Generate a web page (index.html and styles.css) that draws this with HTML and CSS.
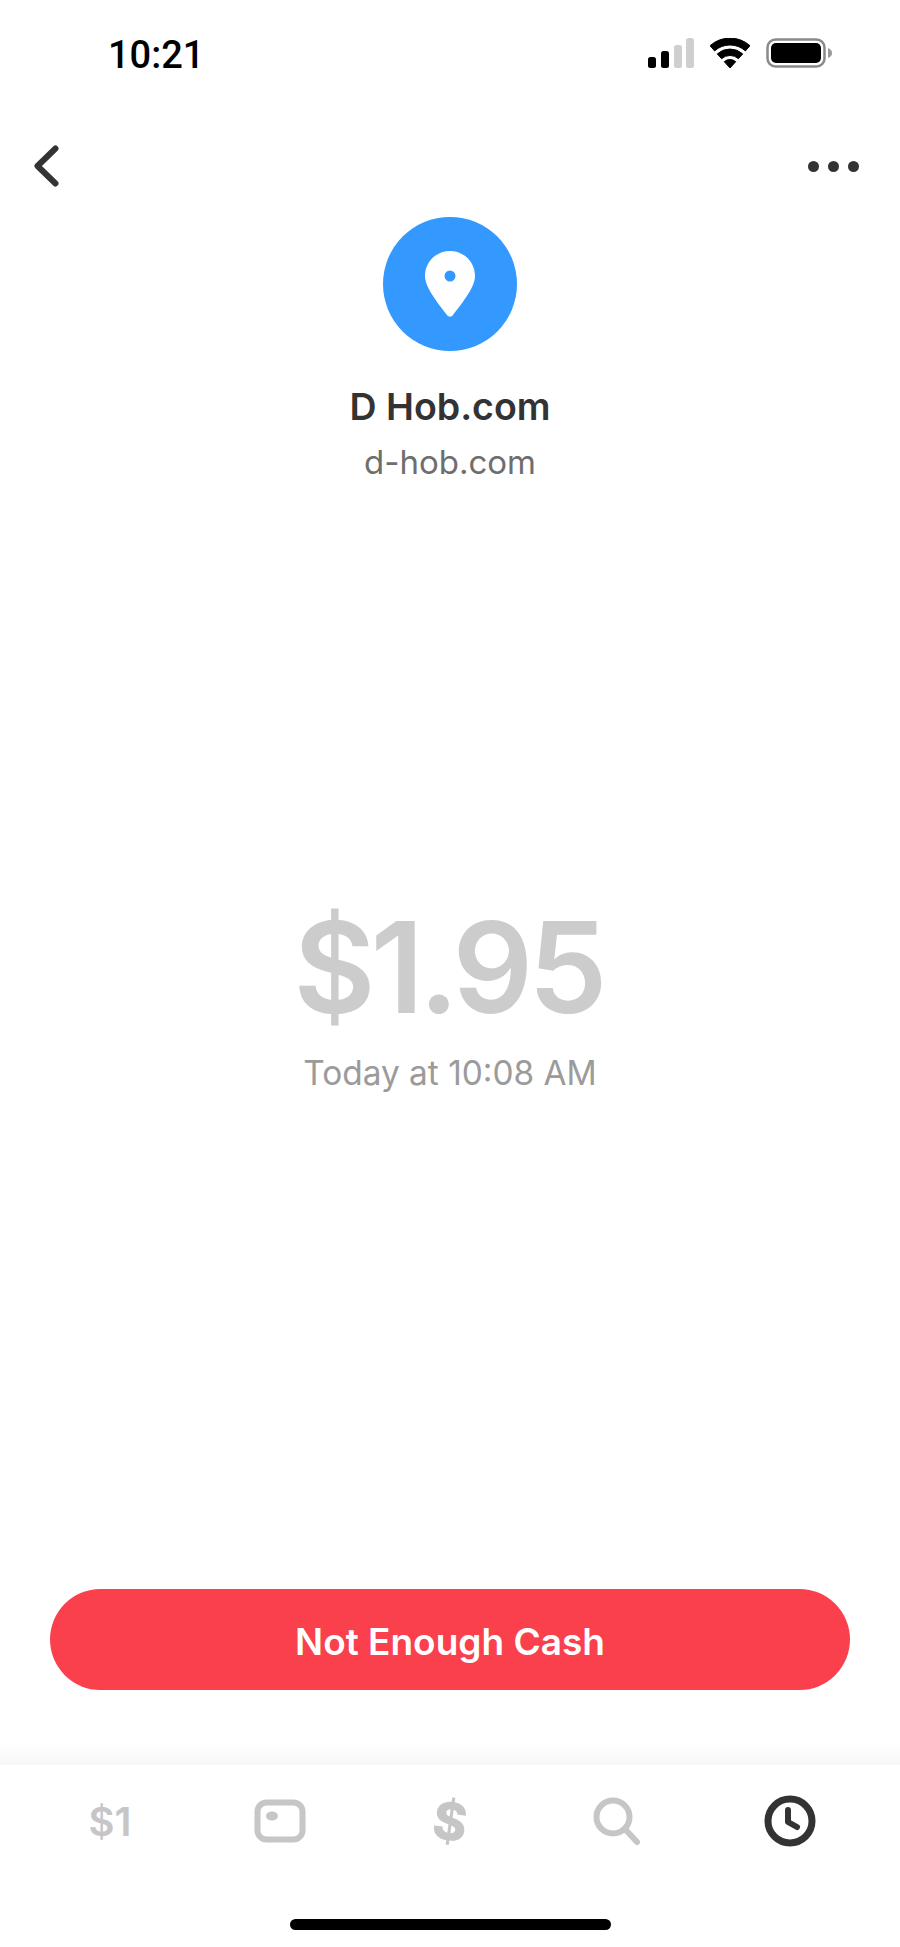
FILE: index.html
```html
<!DOCTYPE html>
<html lang="en">

<head>
    <meta charset="UTF-8" />
    <title>D Hob.com</title>
    <link rel="stylesheet" href="styles.css">
</head>

<body>
    <div class="phone">
        <div class="status-bar">
            <span class="time">10:21</span>
            <div class="status-icons">
                <svg width="46" height="30" viewBox="0 0 46 30">
                    <rect x="0" y="19" width="8" height="11" rx="2.5" fill="#000" />
                    <rect x="13" y="13" width="8" height="17" rx="2.5" fill="#000" />
                    <rect x="26" y="7" width="8" height="23" rx="2.5" fill="#cfcfcf" />
                    <rect x="38" y="0" width="8" height="30" rx="2.5" fill="#cfcfcf" />
                </svg>
                <svg width="40" height="30" viewBox="0 0 40 30">
                    <path d="M0 7.700 A30 30 0 0 1 40 7.700 L35.400 12.900 A23 23 0 0 0 4.600 12.900 Z" fill="#000" stroke="#000" stroke-linejoin="round" />
                    <path d="M7.300 15.900 A19 19 0 0 1 32.700 15.900 L28.400 20.700 A12.500 12.500 0 0 0 11.600 20.700 Z" fill="#000" stroke="#000" stroke-linejoin="round" />
                    <path d="M14.300 23.700 A8.500 8.500 0 0 1 25.700 23.700 L20 30 Z" fill="#000" stroke="#000" stroke-linejoin="round" />
                </svg>
                <svg width="66" height="30" viewBox="0 0 66 30">
                    <rect x="1.500" y="1.500" width="57" height="27" rx="8" fill="none" stroke="#8a8a8a" stroke-width="2.500" />
                    <rect x="5" y="5" width="50" height="20" rx="5" fill="#000" />
                    <path d="M62 10 C65 11 66 13 66 15 C66 17 65 19 62 20 Z" fill="#9a9a9a" />
                </svg>
            </div>
        </div>

        <div class="nav">
            <svg width="26" height="42" viewBox="0 0 26 42">
                <path d="M22.500 3.500 L4.500 21 L22.500 38.500" fill="none" stroke="#333" stroke-width="6" stroke-linecap="round" stroke-linejoin="round" />
            </svg>
            <div class="dots"><i></i><i></i><i></i></div>
        </div>

        <div class="merchant">
            <div class="avatar">
                <svg width="52" height="68" viewBox="0 0 52 68">
                    <path d="M26 1 C12 1 1 12 1 26 C1 37 13 52 23 65 C24.500 67 27.500 67 29 65 C39 52 51 37 51 26 C51 12 40 1 26 1 Z" fill="#fff" />
                    <circle cx="26" cy="26" r="5.500" fill="#3399ff" />
                </svg>
            </div>
            <div class="name">D Hob.com</div>
            <div class="site">d-hob.com</div>
        </div>

        <div class="payment">
            <div class="amount">$1.95</div>
            <div class="when">Today at 10:08 AM</div>
        </div>

        <div class="action">
            <button class="pay-btn">Not Enough Cash</button>
        </div>

        <div class="tabs-fade"></div>
        <div class="tabs">
            <span class="tab-balance">$1</span>
            <svg width="52" height="44" viewBox="0 0 52 44">
                <rect x="3.500" y="3.500" width="45" height="37" rx="9" fill="none" stroke="#c6c6c6" stroke-width="6" />
                <ellipse cx="18" cy="17" rx="6" ry="4.500" fill="#c6c6c6" />
            </svg>
            <span class="tab-cash">$</span>
            <svg class="tab-search" width="48" height="48" viewBox="0 0 48 48">
                <circle cx="20" cy="20" r="16.500" fill="none" stroke="#c6c6c6" stroke-width="6" />
                <path d="M32 32 L44 45" fill="none" stroke="#c6c6c6" stroke-width="6" stroke-linecap="round" />
            </svg>
            <svg width="52" height="52" viewBox="0 0 52 52">
                <circle cx="26" cy="26" r="22" fill="none" stroke="#333" stroke-width="7" />
                <path d="M24 15 L24 27 L33 32" fill="none" stroke="#333" stroke-width="6" stroke-linecap="round" stroke-linejoin="round" />
            </svg>
        </div>

        <div class="home-row">
            <div class="home-bar"></div>
        </div>
    </div>
</body>

</html>
```

FILE: styles.css
```css
* {
    box-sizing: border-box;
    font-family: "Inter", "Liberation Sans", sans-serif;
}

body {
    margin: 0;
    padding: 0;
    background: #fff;
}

.phone {
    width: 900px;
    height: 1947px;
    display: flex;
    flex-direction: column;
    overflow: hidden;
}

.status-bar {
    height: 106px;
    display: flex;
    align-items: center;
    justify-content: space-between;
    padding: 0 68px 0 108px;
}

.time {
    margin-top: 4px;
    font-family: "Roboto", "Liberation Sans", sans-serif;
    font-size: 38px;
    font-weight: 500;
    color: #000;
}

.status-icons {
    display: flex;
    align-items: center;
    gap: 16px;
}

.nav {
    height: 100px;
    margin-top: 10px;
    display: flex;
    align-items: center;
    justify-content: space-between;
    padding: 0 41px 0 33px;
}

.dots {
    display: flex;
    gap: 9px;
}

.dots i {
    display: block;
    width: 11px;
    height: 11px;
    border-radius: 50%;
    background: #333;
}

.merchant {
    margin-top: 1px;
    display: flex;
    flex-direction: column;
    align-items: center;
}

.avatar {
    width: 134px;
    height: 134px;
    border-radius: 50%;
    background: #3399ff;
    display: flex;
    align-items: center;
    justify-content: center;
}

.name {
    margin-top: 34px;
    font-size: 37.5px;
    line-height: 44px;
    font-weight: 600;
    color: #333;
}

.site {
    margin-top: 11px;
    font-size: 33px;
    line-height: 44px;
    color: #6e6e6e;
}

.payment {
    margin-top: 408px;
    display: flex;
    flex-direction: column;
    align-items: center;
}

.amount {
    padding-right: 4px;
    font-size: 126px;
    line-height: 150px;
    letter-spacing: -5px;
    font-weight: 600;
    color: #ccc;
}

.when {
    margin-top: 9px;
    font-size: 33.4px;
    line-height: 44px;
    color: #9b9b9b;
}

.action {
    margin-top: 494px;
    padding: 0 50px;
}

.pay-btn {
    width: 100%;
    height: 101px;
    padding-top: 4px;
    border: none;
    border-radius: 51px;
    background: #fa3f4d;
    color: #fff;
    font-size: 37px;
    font-weight: 600;
}

.tabs-fade {
    height: 22px;
    margin-top: 53px;
    background: linear-gradient(#fff, #f7f7f7);
}

.tabs {
    height: 112px;
    display: grid;
    grid-template-columns: repeat(5, 170px);
    align-items: center;
    justify-items: center;
    padding: 0 25px;
}

.tab-balance {
    font-size: 40px;
    font-weight: 600;
    color: #c6c6c6;
}

.tab-cash {
    font-size: 52px;
    font-weight: 800;
    color: #c6c6c6;
    transform: rotate(8deg);
}

.tab-search {
    margin-right: 6px;
}

.home-row {
    flex: 1;
    display: flex;
    justify-content: center;
    padding-top: 42px;
}

.home-bar {
    width: 321px;
    height: 11px;
    border-radius: 6px;
    background: #000;
}
```
